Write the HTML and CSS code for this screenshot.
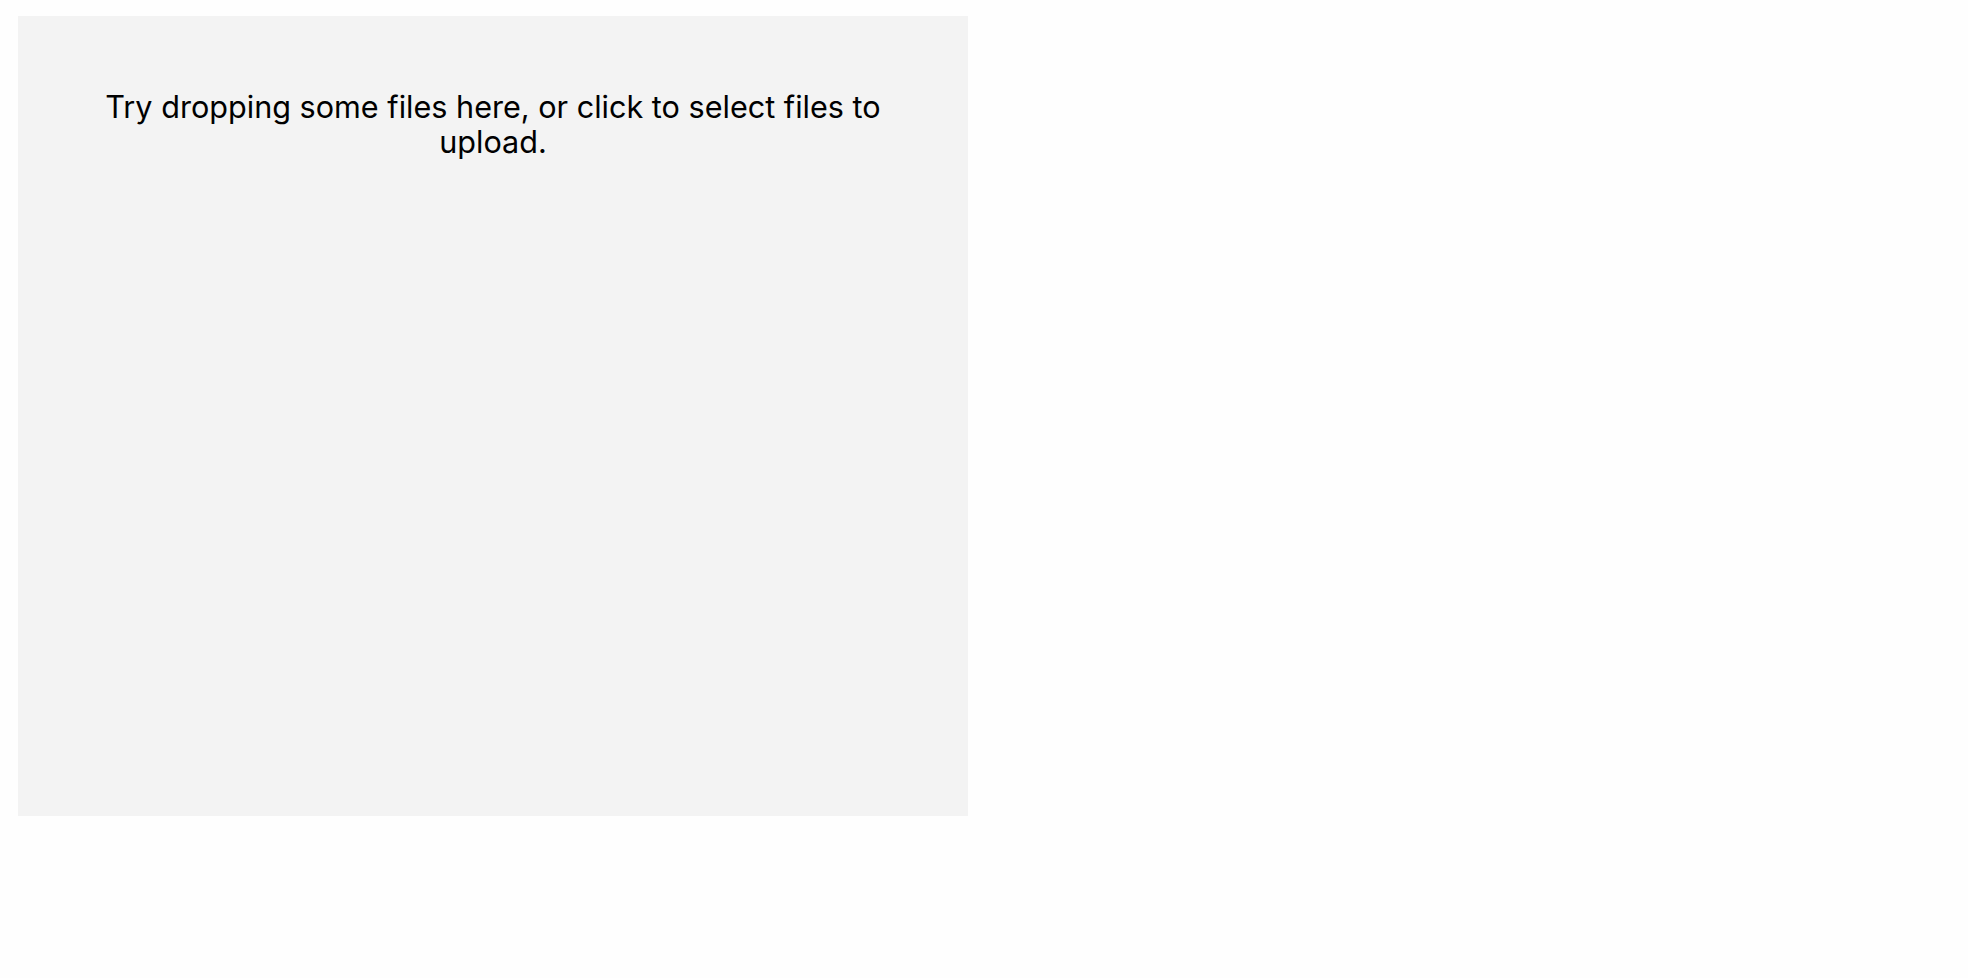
FILE: index.html
```html
<!DOCTYPE html>
<html>
<head>
<meta charset="utf-8">
<link rel="stylesheet" href="styles.css">
</head>
<body>
<div class="dropzone">
  <p class="hint">Try dropping some files here, or click to select files to upload.</p>
</div>
</body>
</html>
```
FILE: styles.css
```css
html, body {
  margin: 0;
  background: #fefefe;
}
body {
  padding: 16px 18px;
}
.dropzone {
  width: 950px;
  height: 800px;
  box-sizing: border-box;
  background: #f3f3f3;
  padding: 73px 80px;
  font-family: Inter, sans-serif;
  color: #000;
}
.hint {
  margin: 0;
  font-size: 30.6px;
  line-height: 35px;
  text-align: center;
}
```
